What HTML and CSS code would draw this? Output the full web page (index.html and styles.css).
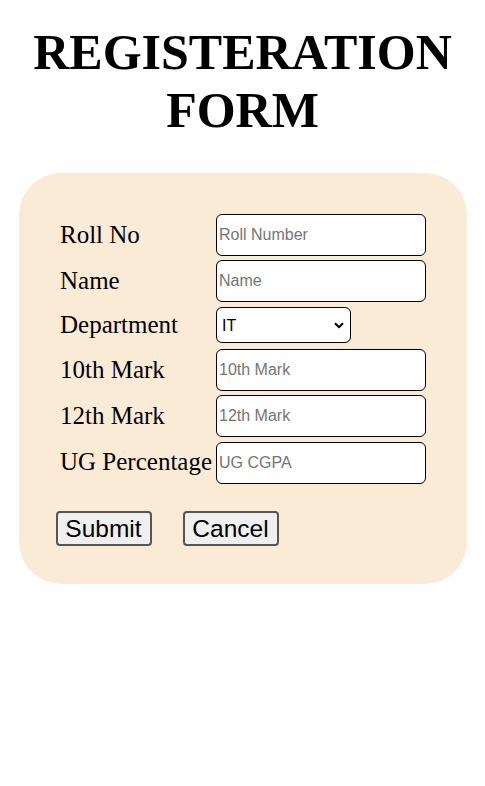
FILE: index.html
```html
<!DOCTYPE html>
<html>
<head>
<meta charset="utf-8">
<title>Registeration Form</title>
<link rel="stylesheet" href="styles.css">
</head>
<body>
<h1 class="title">REGISTERATION FORM</h1>
<form class="card">
  <table class="fields">
    <tr>
      <td class="label">Roll No</td>
      <td><input class="field" type="text" placeholder="Roll Number"></td>
    </tr>
    <tr>
      <td class="label">Name</td>
      <td><input class="field" type="text" placeholder="Name"></td>
    </tr>
    <tr>
      <td class="label">Department</td>
      <td>
        <select class="dept">
          <option>IT</option>
          <option>CSE</option>
          <option>ECE</option>
          <option>EEE</option>
          <option>MECH</option>
        </select>
      </td>
    </tr>
    <tr>
      <td class="label">10th Mark</td>
      <td><input class="field" type="text" placeholder="10th Mark"></td>
    </tr>
    <tr>
      <td class="label">12th Mark</td>
      <td><input class="field" type="text" placeholder="12th Mark"></td>
    </tr>
    <tr class="last-row">
      <td class="label">UG Percentage</td>
      <td><input class="field" type="text" placeholder="UG CGPA"></td>
    </tr>
  </table>
  <div class="actions">
    <button class="btn" type="submit">Submit</button>
    <button class="btn" type="reset">Cancel</button>
  </div>
</form>
</body>
</html>
```
FILE: styles.css
```css
html, body {
  background: #ffffff;
}

body {
  margin: 8px;
  font-family: "Liberation Serif", "Times New Roman", serif;
  color: #000;
}

.title {
  font-family: "Liberation Serif", "Times New Roman", serif;
  font-weight: bold;
  font-size: 50px;
  line-height: 57.5px;
  text-align: center;
  margin: 16px 0 33.5px;
}

.card {
  box-sizing: border-box;
  width: 448px;
  margin: 0 auto;
  padding: 38px 36.5px 38px 38.5px;
  background: #faebd7;
  border-radius: 42px;
}

.fields {
  border-spacing: 2px;
  font-size: 25px;
}

.fields td {
  padding: 1px;
  vertical-align: middle;
}

.label {
  font-family: "Liberation Serif", "Times New Roman", serif;
  font-size: 25px;
  white-space: nowrap;
}

.field {
  display: block;
  box-sizing: border-box;
  width: 210px;
  height: 42px;
  margin: 0;
  padding: 1px 2px;
  border: 1px solid #000;
  border-radius: 6px;
  background: #fff;
  font-family: "Liberation Sans", Arial, sans-serif;
  font-size: 16px;
  color: #000;
}

.field::placeholder {
  color: #757575;
}

.last-row .field {
  margin-top: 1.5px;
}

.dept {
  display: block;
  box-sizing: border-box;
  width: 135px;
  height: 36px;
  margin: 1.5px 0;
  padding: 0 20px 0 5px;
  border: 1px solid #000;
  border-radius: 6px;
  -webkit-appearance: none;
  appearance: none;
  background-color: #fff;
  background-image: url("data:image/svg+xml;utf8,<svg xmlns='http://www.w3.org/2000/svg' width='10' height='7' viewBox='0 0 10 7'><path d='M1 1.2 L5 5.2 L9 1.2' fill='none' stroke='black' stroke-width='2'/></svg>");
  background-repeat: no-repeat;
  background-position: right 6px center;
  background-size: 10px 7px;
  font-family: "Liberation Sans", Arial, sans-serif;
  font-size: 16px;
  color: #000;
}

.actions {
  display: flex;
  gap: 31px;
  margin-top: 23.5px;
  margin-left: -1.5px;
}

.btn {
  box-sizing: border-box;
  width: 96px;
  height: 35px;
  padding: 1px 0;
  border: 2px solid #555;
  border-radius: 4px;
  background: #efefef;
  font-family: "Liberation Sans", Arial, sans-serif;
  font-size: 24.5px;
  line-height: 29px;
  text-align: center;
  color: #000;
}
```
